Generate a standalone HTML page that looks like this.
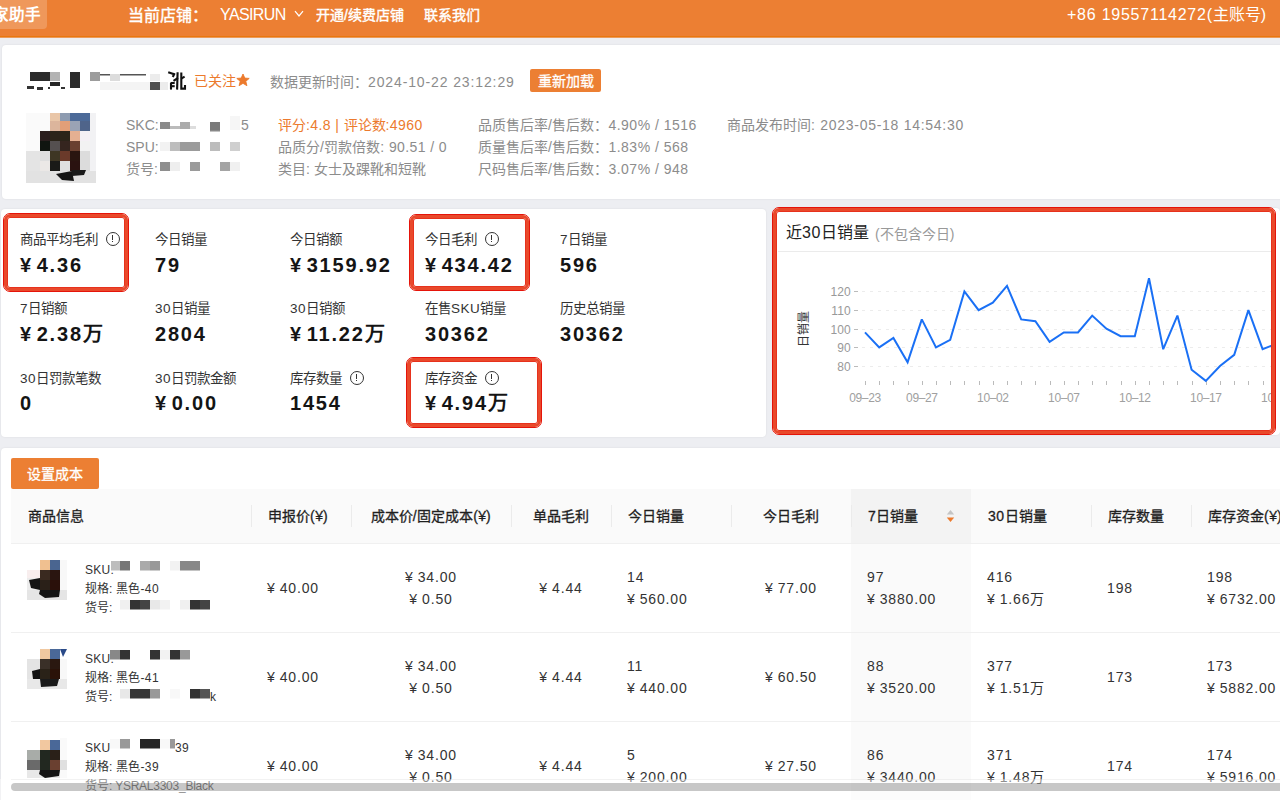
<!DOCTYPE html>
<html lang="zh-CN">
<head>
<meta charset="utf-8">
<style>
*{margin:0;padding:0;box-sizing:border-box;}
html,body{width:1280px;height:800px;overflow:hidden;}
body{background:#edeef2;font-family:"Liberation Sans",sans-serif;color:#333;position:relative;}
.a{position:absolute;white-space:nowrap;}
.card{position:absolute;background:#fff;border-radius:4px;box-shadow:0 0 2px rgba(0,0,0,0.09);}
.redbox{position:absolute;border:1px solid #e5140a;border-radius:7px;}
.redbox>i{position:absolute;left:0;top:0;right:0;bottom:0;border:3px solid #e9492b;border-radius:6px;box-shadow:inset 0 0 0 1px #e7321d;}
.info{display:inline-block;width:14px;height:14px;border:1.2px solid #333;border-radius:50%;position:relative;vertical-align:-2px;margin-left:8px;}
.info:after{content:"";position:absolute;left:5.2px;top:2.5px;width:1.3px;height:5px;background:#333;}
.info:before{content:"";position:absolute;left:5.2px;top:8.6px;width:1.3px;height:1.4px;background:#333;}
</style>
</head>
<body>

<div class="a" style="left:0px;top:0px;width:1280px;height:38px;background:#ec7f33;"></div>
<div class="a" style="left:0px;top:36px;width:1280px;height:1px;background:#e9780e;"></div>
<div class="a" style="left:0px;top:37px;width:1280px;height:1px;background:#ec9a5c;"></div>
<div class="a" style="left:0px;top:0px;width:47px;height:29px;background:rgba(255,255,255,0.2);border-radius:0 0 4px 0;"></div>
<div class="a" style="left:-7px;top:5px;font-size:15.5px;line-height:20px;color:#fff;font-weight:bold;">家助手</div>
<div class="a" style="left:128px;top:6px;font-size:16px;line-height:20px;color:#fff;-webkit-text-stroke:0.4px #fff;">当前店铺：</div>
<div class="a" style="left:220px;top:5px;font-size:16px;line-height:20px;color:#fff;"><span style="letter-spacing:-0.6px">YASIRUN</span></div>
<svg class="a" style="left:294px;top:10px;" width="10" height="8" viewBox="0 0 10 8"><path d="M1 1.2 L5 6 L9 1.2" fill="none" stroke="#fff" stroke-width="1.2"/></svg>
<div class="a" style="left:316px;top:5px;font-size:14px;line-height:20px;color:#fff;-webkit-text-stroke:0.4px #fff;">开通<span style="letter-spacing:0.3px">/</span>续费店铺</div>
<div class="a" style="left:424px;top:5px;font-size:14px;line-height:20px;color:#fff;-webkit-text-stroke:0.4px #fff;">联系我们</div>
<div class="a" style="left:1067px;top:5px;font-size:16px;line-height:20px;color:#fff;"><span style="letter-spacing:0.76px">+86 19557114272(</span>主账号<span style="letter-spacing:0.76px">)</span></div>
<div class="card" style="left:2px;top:45px;width:1290px;height:154px;"></div>
<svg class="a" style="left:26px;top:70px;" width="145" height="22" viewBox="0 0 145 22"><rect x="4" y="2" width="20" height="9" fill="#2b2b2b"/><rect x="24" y="2" width="10" height="9" fill="#b3b3b3"/><rect x="24" y="12" width="10" height="4" fill="#262626"/><rect x="1" y="16" width="7" height="3" fill="#333"/><rect x="11" y="17" width="6" height="3" fill="#333"/><rect x="22" y="17" width="2" height="2" fill="#333"/><rect x="35" y="17" width="4" height="2" fill="#333"/><rect x="44" y="2" width="10" height="16" fill="#2b2b2b"/><rect x="64" y="2" width="10" height="9" fill="#9c9c9c"/><rect x="74" y="4" width="46" height="1.5" fill="#555"/><rect x="84" y="4" width="10" height="7" fill="#dcdcdc"/><rect x="74" y="12" width="60" height="8" fill="#f4f4f4"/><rect x="124" y="4" width="10" height="7" fill="#ececec"/><rect x="124" y="12" width="10" height="8" fill="#505050"/><rect x="134" y="12" width="8" height="8" fill="#ececec"/></svg>
<svg class="a" style="left:160px;top:66px;" width="30" height="28" viewBox="0 0 30 28"><g fill="none" stroke="#111" stroke-width="2.1" stroke-linecap="butt"><path d="M8.2 6.2 L14.2 8.3"/><path d="M14.6 7.2 L12.8 11"/><path d="M17.6 6.2 L17.1 23.6"/><path d="M11 16.5 L11 23.6"/><path d="M11 17 L14.7 17"/><path d="M11 20.2 L14.7 20.2"/><path d="M13.5 14.8 L18 12"/><path d="M21.3 6.5 L21.3 22.6 L25 22.6 L25 19"/><path d="M24.6 10.7 L21.3 12.6"/></g></svg>
<div class="a" style="left:194px;top:71px;font-size:14px;line-height:20px;color:#ec7a2d;">已关注</div>
<svg class="a" style="left:236px;top:73px;" width="14" height="14" viewBox="0 0 14 14"><path d="M7 1 L8.8 5.1 L13.2 5.4 L9.8 8.3 L10.9 12.7 L7 10.3 L3.1 12.7 L4.2 8.3 L0.8 5.4 L5.2 5.1 Z" fill="#ec7a2d" stroke="#ec7a2d" stroke-width="0.9" stroke-linejoin="round"/></svg>
<div class="a" style="left:270px;top:72px;font-size:14px;line-height:20px;color:#8c8c8c;">数据更新时间：<span style="letter-spacing:0.88px">2024-10-22 23:12:29</span></div>
<div class="a" style="left:530px;top:69px;width:71px;height:23px;background:#ec7f33;border-radius:2px;"></div>
<div class="a" style="left:538px;top:71px;font-size:14px;line-height:20px;color:#fff;-webkit-text-stroke:0.3px #fff;">重新加载</div>
<svg class="a" style="left:26px;top:113px;" width="70" height="70" viewBox="0 0 70 70"><rect x="0" y="0" width="70" height="70" fill="#f4f4f4"/><rect x="0" y="0" width="24" height="38" fill="#fafafa"/><rect x="0" y="38" width="14" height="32" fill="#e4e4e4"/><rect x="14" y="38" width="10" height="10" fill="#dedede"/><rect x="14" y="48" width="10" height="22" fill="#ebe8e6"/><rect x="24" y="0" width="10" height="8" fill="#e9c6a8"/><rect x="34" y="0" width="10" height="8" fill="#8d9bb0"/><rect x="44" y="0" width="20" height="8" fill="#4c6a98"/><rect x="24" y="8" width="10" height="10" fill="#dcb59c"/><rect x="34" y="8" width="10" height="10" fill="#e29f78"/><rect x="44" y="8" width="10" height="10" fill="#9aa3b5"/><rect x="54" y="8" width="10" height="10" fill="#4f648a"/><rect x="64" y="0" width="6" height="70" fill="#f2f2f4"/><rect x="14" y="18" width="10" height="10" fill="#2a1e1e"/><rect x="24" y="18" width="20" height="10" fill="#2b2419"/><rect x="44" y="18" width="10" height="10" fill="#e5b092"/><rect x="54" y="18" width="10" height="10" fill="#f5f0f5"/><rect x="14" y="28" width="10" height="10" fill="#101510"/><rect x="24" y="28" width="10" height="10" fill="#555050"/><rect x="34" y="28" width="10" height="10" fill="#35251f"/><rect x="44" y="28" width="10" height="10" fill="#6a4030"/><rect x="54" y="28" width="10" height="10" fill="#f2f2f2"/><rect x="24" y="38" width="10" height="10" fill="#3e3624"/><rect x="34" y="38" width="10" height="10" fill="#6a3a2a"/><rect x="44" y="38" width="10" height="10" fill="#2a1510"/><rect x="54" y="38" width="10" height="20" fill="#dcdcdc"/><rect x="24" y="48" width="10" height="10" fill="#1a1a18"/><rect x="34" y="48" width="10" height="10" fill="#e0e0e0"/><rect x="44" y="48" width="10" height="10" fill="#2a1210"/><rect x="0" y="58" width="70" height="12" fill="#e2e2e2"/><path d="M30 61 L46 58 L48 68 L36 67 Z" fill="#151515"/><path d="M46 57 L60 57 L58 62 L46 63 Z" fill="#1a1a1a"/></svg>
<div class="a" style="left:126px;top:115px;font-size:14px;line-height:20px;color:#8c8c8c;">SKC:</div>
<div class="a" style="left:126px;top:137px;font-size:14px;line-height:20px;color:#8c8c8c;">SPU:</div>
<div class="a" style="left:126px;top:159px;font-size:14px;line-height:20px;color:#8c8c8c;">货号:</div>
<svg class="a" style="left:156px;top:112px;" width="100" height="66" viewBox="0 0 100 66"><rect x="4" y="10" width="10" height="7" fill="#8a8a8a"/><rect x="14" y="14" width="10" height="3" fill="#bbb"/><rect x="24" y="10" width="10" height="7" fill="#ababab"/><rect x="34" y="14" width="6" height="3" fill="#ddd"/><rect x="54" y="10" width="10" height="8" fill="#7a7a7a"/><rect x="54" y="18" width="10" height="1.5" fill="#888"/><rect x="74" y="4" width="10" height="14" fill="#f6f6f6"/><rect x="14" y="30" width="10" height="9" fill="#bdbdbd"/><rect x="24" y="30" width="20" height="9" fill="#9b9b9b"/><rect x="54" y="30" width="10" height="9" fill="#bcbcbc"/><rect x="74" y="30" width="10" height="9" fill="#cfcfcf"/><rect x="4" y="30" width="10" height="9" fill="#f2f2f2"/><rect x="4" y="50" width="10" height="9" fill="#8e8e8e"/><rect x="14" y="50" width="10" height="9" fill="#eeeeee"/><rect x="34" y="50" width="10" height="9" fill="#9a9a9a"/><rect x="64" y="50" width="10" height="9" fill="#a4a4a4"/><rect x="74" y="50" width="10" height="9" fill="#f0f0f0"/></svg>
<div class="a" style="left:241px;top:115px;font-size:14px;line-height:20px;color:#8c8c8c;">5</div>
<div class="a" style="left:278px;top:115px;font-size:14px;line-height:20px;color:#ec7a2d;">评分<span style="letter-spacing:0.4px">:4.8 | </span>评论数<span style="letter-spacing:0.4px">:4960</span></div>
<div class="a" style="left:278px;top:137px;font-size:14px;line-height:20px;color:#8c8c8c;">品质分<span style="letter-spacing:0.4px">/</span>罚款倍数<span style="letter-spacing:0.4px">: 90.51 / 0</span></div>
<div class="a" style="left:278px;top:159px;font-size:14px;line-height:20px;color:#8c8c8c;">类目: 女士及踝靴和短靴</div>
<div class="a" style="left:478px;top:115px;font-size:14px;line-height:20px;color:#8c8c8c;">品质售后率<span style="letter-spacing:0.5px">/</span>售后数：<span style="letter-spacing:0.5px">4.90% / 1516</span></div>
<div class="a" style="left:478px;top:137px;font-size:14px;line-height:20px;color:#8c8c8c;">质量售后率<span style="letter-spacing:0.5px">/</span>售后数：<span style="letter-spacing:0.5px">1.83% / 568</span></div>
<div class="a" style="left:478px;top:159px;font-size:14px;line-height:20px;color:#8c8c8c;">尺码售后率<span style="letter-spacing:0.5px">/</span>售后数：<span style="letter-spacing:0.5px">3.07% / 948</span></div>
<div class="a" style="left:727px;top:115px;font-size:14px;line-height:20px;color:#8c8c8c;">商品发布时间<span style="letter-spacing:0.72px">: 2023-05-18 14:54:30</span></div>
<div class="card" style="left:1px;top:209px;width:765px;height:228px;"></div>
<div class="a" style="left:20px;top:229.5px;font-size:13.5px;line-height:20px;color:#333;">商品平均毛利<span class=info></span></div>
<div class="a" style="left:20px;top:255px;font-size:20px;line-height:20px;color:#141414;font-weight:bold;">¥ <span style="letter-spacing:1.8px">4.36</span></div>
<div class="a" style="left:155px;top:229.5px;font-size:13.5px;line-height:20px;color:#333;">今日销量</div>
<div class="a" style="left:155px;top:255px;font-size:20px;line-height:20px;color:#141414;font-weight:bold;"><span style="letter-spacing:1.8px">79</span></div>
<div class="a" style="left:290px;top:229.5px;font-size:13.5px;line-height:20px;color:#333;">今日销额</div>
<div class="a" style="left:290px;top:255px;font-size:20px;line-height:20px;color:#141414;font-weight:bold;">¥ <span style="letter-spacing:1.8px">3159.92</span></div>
<div class="a" style="left:425px;top:229.5px;font-size:13.5px;line-height:20px;color:#333;">今日毛利<span class=info></span></div>
<div class="a" style="left:425px;top:255px;font-size:20px;line-height:20px;color:#141414;font-weight:bold;">¥ <span style="letter-spacing:1.8px">434.42</span></div>
<div class="a" style="left:560px;top:229.5px;font-size:13.5px;line-height:20px;color:#333;"><span style="letter-spacing:0.5px">7</span>日销量</div>
<div class="a" style="left:560px;top:255px;font-size:20px;line-height:20px;color:#141414;font-weight:bold;"><span style="letter-spacing:1.8px">596</span></div>
<div class="a" style="left:20px;top:299px;font-size:13.5px;line-height:20px;color:#333;"><span style="letter-spacing:0.5px">7</span>日销额</div>
<div class="a" style="left:20px;top:324px;font-size:20px;line-height:20px;color:#141414;font-weight:bold;">¥ <span style="letter-spacing:1.8px">2.38</span>万</div>
<div class="a" style="left:155px;top:299px;font-size:13.5px;line-height:20px;color:#333;"><span style="letter-spacing:0.5px">30</span>日销量</div>
<div class="a" style="left:155px;top:324px;font-size:20px;line-height:20px;color:#141414;font-weight:bold;"><span style="letter-spacing:1.8px">2804</span></div>
<div class="a" style="left:290px;top:299px;font-size:13.5px;line-height:20px;color:#333;"><span style="letter-spacing:0.5px">30</span>日销额</div>
<div class="a" style="left:290px;top:324px;font-size:20px;line-height:20px;color:#141414;font-weight:bold;">¥ <span style="letter-spacing:1.8px">11.22</span>万</div>
<div class="a" style="left:425px;top:299px;font-size:13.5px;line-height:20px;color:#333;">在售<span style="letter-spacing:0.5px">SKU</span>销量</div>
<div class="a" style="left:425px;top:324px;font-size:20px;line-height:20px;color:#141414;font-weight:bold;"><span style="letter-spacing:1.8px">30362</span></div>
<div class="a" style="left:560px;top:299px;font-size:13.5px;line-height:20px;color:#333;">历史总销量</div>
<div class="a" style="left:560px;top:324px;font-size:20px;line-height:20px;color:#141414;font-weight:bold;"><span style="letter-spacing:1.8px">30362</span></div>
<div class="a" style="left:20px;top:368.5px;font-size:13.5px;line-height:20px;color:#333;"><span style="letter-spacing:0.5px">30</span>日罚款笔数</div>
<div class="a" style="left:20px;top:393px;font-size:20px;line-height:20px;color:#141414;font-weight:bold;"><span style="letter-spacing:1.8px">0</span></div>
<div class="a" style="left:155px;top:368.5px;font-size:13.5px;line-height:20px;color:#333;"><span style="letter-spacing:0.5px">30</span>日罚款金额</div>
<div class="a" style="left:155px;top:393px;font-size:20px;line-height:20px;color:#141414;font-weight:bold;">¥ <span style="letter-spacing:1.8px">0.00</span></div>
<div class="a" style="left:290px;top:368.5px;font-size:13.5px;line-height:20px;color:#333;">库存数量<span class=info></span></div>
<div class="a" style="left:290px;top:393px;font-size:20px;line-height:20px;color:#141414;font-weight:bold;"><span style="letter-spacing:1.8px">1454</span></div>
<div class="a" style="left:425px;top:368.5px;font-size:13.5px;line-height:20px;color:#333;">库存资金<span class=info></span></div>
<div class="a" style="left:425px;top:393px;font-size:20px;line-height:20px;color:#141414;font-weight:bold;">¥ <span style="letter-spacing:1.8px">4.94</span>万</div>
<div class="redbox" style="left:3px;top:213px;width:126px;height:79px;"><i></i></div>
<div class="redbox" style="left:409px;top:214px;width:121px;height:77px;"><i></i></div>
<div class="redbox" style="left:406px;top:357px;width:136px;height:71px;"><i></i></div>
<div class="card" style="left:773px;top:208px;width:507px;height:227px;"></div>
<div class="a" style="left:786px;top:223px;font-size:16px;line-height:20px;color:#222;">近<span style="letter-spacing:0.5px">30</span>日销量</div>
<div class="a" style="left:875px;top:224px;font-size:14px;line-height:20px;color:#999;">(不包含今日)</div>
<div class="a" style="left:778px;top:251px;width:493px;height:1px;background:#ebebeb;"></div>
<svg class="a" style="left:773px;top:208px;" width="500" height="227" viewBox="0 0 500 227"><line x1="89" y1="158.5" x2="500" y2="158.5" stroke="#ececec" stroke-width="1" stroke-dasharray="3 5"/><line x1="81" y1="158.5" x2="85" y2="158.5" stroke="#bbb" stroke-width="1"/><text x="78" y="162.8" text-anchor="end" font-size="12" fill="#999" letter-spacing="0.2" font-family="Liberation Sans">80</text><line x1="89" y1="139.5" x2="500" y2="139.5" stroke="#ececec" stroke-width="1" stroke-dasharray="3 5"/><line x1="81" y1="139.5" x2="85" y2="139.5" stroke="#bbb" stroke-width="1"/><text x="78" y="143.8" text-anchor="end" font-size="12" fill="#999" letter-spacing="0.2" font-family="Liberation Sans">90</text><line x1="89" y1="121.5" x2="500" y2="121.5" stroke="#ececec" stroke-width="1" stroke-dasharray="3 5"/><line x1="81" y1="121.5" x2="85" y2="121.5" stroke="#bbb" stroke-width="1"/><text x="78" y="125.8" text-anchor="end" font-size="12" fill="#999" letter-spacing="0.2" font-family="Liberation Sans">100</text><line x1="89" y1="102.5" x2="500" y2="102.5" stroke="#ececec" stroke-width="1" stroke-dasharray="3 5"/><line x1="81" y1="102.5" x2="85" y2="102.5" stroke="#bbb" stroke-width="1"/><text x="78" y="106.8" text-anchor="end" font-size="12" fill="#999" letter-spacing="0.2" font-family="Liberation Sans">110</text><line x1="89" y1="83.5" x2="500" y2="83.5" stroke="#ececec" stroke-width="1" stroke-dasharray="3 5"/><line x1="81" y1="83.5" x2="85" y2="83.5" stroke="#bbb" stroke-width="1"/><text x="78" y="87.8" text-anchor="end" font-size="12" fill="#999" letter-spacing="0.2" font-family="Liberation Sans">120</text><line x1="92.5" y1="173" x2="92.5" y2="177" stroke="#bbb" stroke-width="1"/><line x1="106.5" y1="173" x2="106.5" y2="177" stroke="#bbb" stroke-width="1"/><line x1="120.5" y1="173" x2="120.5" y2="177" stroke="#bbb" stroke-width="1"/><line x1="135.5" y1="173" x2="135.5" y2="177" stroke="#bbb" stroke-width="1"/><line x1="149.5" y1="173" x2="149.5" y2="177" stroke="#bbb" stroke-width="1"/><line x1="163.5" y1="173" x2="163.5" y2="177" stroke="#bbb" stroke-width="1"/><line x1="177.5" y1="173" x2="177.5" y2="177" stroke="#bbb" stroke-width="1"/><line x1="191.5" y1="173" x2="191.5" y2="177" stroke="#bbb" stroke-width="1"/><line x1="206.5" y1="173" x2="206.5" y2="177" stroke="#bbb" stroke-width="1"/><line x1="220.5" y1="173" x2="220.5" y2="177" stroke="#bbb" stroke-width="1"/><line x1="234.5" y1="173" x2="234.5" y2="177" stroke="#bbb" stroke-width="1"/><line x1="248.5" y1="173" x2="248.5" y2="177" stroke="#bbb" stroke-width="1"/><line x1="262.5" y1="173" x2="262.5" y2="177" stroke="#bbb" stroke-width="1"/><line x1="277.5" y1="173" x2="277.5" y2="177" stroke="#bbb" stroke-width="1"/><line x1="291.5" y1="173" x2="291.5" y2="177" stroke="#bbb" stroke-width="1"/><line x1="305.5" y1="173" x2="305.5" y2="177" stroke="#bbb" stroke-width="1"/><line x1="319.5" y1="173" x2="319.5" y2="177" stroke="#bbb" stroke-width="1"/><line x1="333.5" y1="173" x2="333.5" y2="177" stroke="#bbb" stroke-width="1"/><line x1="348.5" y1="173" x2="348.5" y2="177" stroke="#bbb" stroke-width="1"/><line x1="362.5" y1="173" x2="362.5" y2="177" stroke="#bbb" stroke-width="1"/><line x1="376.5" y1="173" x2="376.5" y2="177" stroke="#bbb" stroke-width="1"/><line x1="390.5" y1="173" x2="390.5" y2="177" stroke="#bbb" stroke-width="1"/><line x1="404.5" y1="173" x2="404.5" y2="177" stroke="#bbb" stroke-width="1"/><line x1="419.5" y1="173" x2="419.5" y2="177" stroke="#bbb" stroke-width="1"/><line x1="433.5" y1="173" x2="433.5" y2="177" stroke="#bbb" stroke-width="1"/><line x1="447.5" y1="173" x2="447.5" y2="177" stroke="#bbb" stroke-width="1"/><line x1="461.5" y1="173" x2="461.5" y2="177" stroke="#bbb" stroke-width="1"/><line x1="475.5" y1="173" x2="475.5" y2="177" stroke="#bbb" stroke-width="1"/><line x1="490.5" y1="173" x2="490.5" y2="177" stroke="#bbb" stroke-width="1"/><line x1="504.5" y1="173" x2="504.5" y2="177" stroke="#bbb" stroke-width="1"/><text x="92.0" y="193.8" text-anchor="middle" font-size="12" fill="#a0a0a0" letter-spacing="-0.4" font-family="Liberation Sans">09–23</text><text x="148.8" y="193.8" text-anchor="middle" font-size="12" fill="#a0a0a0" letter-spacing="-0.4" font-family="Liberation Sans">09–27</text><text x="219.8" y="193.8" text-anchor="middle" font-size="12" fill="#a0a0a0" letter-spacing="-0.4" font-family="Liberation Sans">10–02</text><text x="290.8" y="193.8" text-anchor="middle" font-size="12" fill="#a0a0a0" letter-spacing="-0.4" font-family="Liberation Sans">10–07</text><text x="361.8" y="193.8" text-anchor="middle" font-size="12" fill="#a0a0a0" letter-spacing="-0.4" font-family="Liberation Sans">10–12</text><text x="432.8" y="193.8" text-anchor="middle" font-size="12" fill="#a0a0a0" letter-spacing="-0.4" font-family="Liberation Sans">10–17</text><text x="503.8" y="193.8" text-anchor="middle" font-size="12" fill="#a0a0a0" letter-spacing="-0.4" font-family="Liberation Sans">10–22</text><polyline points="92.0,124.4 106.2,139.4 120.4,130.0 134.6,154.3 148.8,111.4 163.0,139.4 177.2,131.9 191.4,83.4 205.6,102.1 219.8,94.6 234.0,77.8 248.2,111.4 262.4,113.2 276.6,133.8 290.8,124.4 305.0,124.4 319.2,107.6 333.4,120.7 347.6,128.2 361.8,128.2 376.0,70.3 390.2,141.2 404.4,107.6 418.6,161.7 432.8,172.9 447.0,158.0 461.2,146.8 475.4,102.1 489.6,141.2 503.8,135.6" fill="none" stroke="#1a70f5" stroke-width="2" stroke-linejoin="miter" stroke-miterlimit="2.5"/><text transform="translate(31,120.5) rotate(-90)" text-anchor="middle" font-size="12" fill="#333" y="4" font-family="Liberation Sans">日销量</text></svg>
<div class="redbox" style="left:772px;top:207px;width:504px;height:228px;"><i></i></div>
<div class="card" style="left:1px;top:448px;width:1290px;height:400px;"></div>
<div class="a" style="left:11px;top:458px;width:88px;height:31px;background:#ec7f33;border-radius:2px;"></div>
<div class="a" style="left:27px;top:464px;font-size:14px;line-height:20px;color:#fff;-webkit-text-stroke:0.3px #fff;">设置成本</div>
<div class="a" style="left:11px;top:489px;width:1280px;height:55px;background:#fafafa;"></div>
<div class="a" style="left:851px;top:489px;width:120px;height:55px;background:#f3f3f3;"></div>
<div class="a" style="left:851px;top:544px;width:120px;height:260px;background:#fafafa;"></div>
<div class="a" style="left:11px;top:543px;width:1280px;height:1px;background:#f0f0f0;"></div>
<div class="a" style="left:28px;top:506px;font-size:14px;line-height:20px;color:#1f1f1f;-webkit-text-stroke:0.3px #1f1f1f;">商品信息</div>
<div class="a" style="left:251px;top:505px;width:1px;height:22px;background:#ebebeb;"></div>
<div class="a" style="left:268px;top:506px;font-size:14px;line-height:20px;color:#1f1f1f;-webkit-text-stroke:0.3px #1f1f1f;">申报价<span style="letter-spacing:0.5px">(</span>¥<span style="letter-spacing:0.5px">)</span></div>
<div class="a" style="left:351px;top:505px;width:1px;height:22px;background:#ebebeb;"></div>
<div class="a" style="left:351px;width:160px;text-align:center;top:506px;font-size:14px;line-height:20px;color:#1f1f1f;-webkit-text-stroke:0.3px #1f1f1f;">成本价<span style="letter-spacing:0.5px">/</span>固定成本<span style="letter-spacing:0.5px">(</span>¥<span style="letter-spacing:0.5px">)</span></div>
<div class="a" style="left:511px;top:505px;width:1px;height:22px;background:#ebebeb;"></div>
<div class="a" style="left:511px;width:100px;text-align:center;top:506px;font-size:14px;line-height:20px;color:#1f1f1f;-webkit-text-stroke:0.3px #1f1f1f;">单品毛利</div>
<div class="a" style="left:611px;top:505px;width:1px;height:22px;background:#ebebeb;"></div>
<div class="a" style="left:628px;top:506px;font-size:14px;line-height:20px;color:#1f1f1f;-webkit-text-stroke:0.3px #1f1f1f;">今日销量</div>
<div class="a" style="left:731px;top:505px;width:1px;height:22px;background:#ebebeb;"></div>
<div class="a" style="left:731px;width:120px;text-align:center;top:506px;font-size:14px;line-height:20px;color:#1f1f1f;-webkit-text-stroke:0.3px #1f1f1f;">今日毛利</div>
<div class="a" style="left:851px;top:505px;width:1px;height:22px;background:#ebebeb;"></div>
<div class="a" style="left:868px;top:506px;font-size:14px;line-height:20px;color:#1f1f1f;-webkit-text-stroke:0.3px #1f1f1f;"><span style="letter-spacing:0.5px">7</span>日销量</div>
<div class="a" style="left:988px;top:506px;font-size:14px;line-height:20px;color:#1f1f1f;-webkit-text-stroke:0.3px #1f1f1f;"><span style="letter-spacing:0.5px">30</span>日销量</div>
<div class="a" style="left:1091px;top:505px;width:1px;height:22px;background:#ebebeb;"></div>
<div class="a" style="left:1108px;top:506px;font-size:14px;line-height:20px;color:#1f1f1f;-webkit-text-stroke:0.3px #1f1f1f;">库存数量</div>
<div class="a" style="left:1191px;top:505px;width:1px;height:22px;background:#ebebeb;"></div>
<div class="a" style="left:1208px;top:506px;font-size:14px;line-height:20px;color:#1f1f1f;-webkit-text-stroke:0.3px #1f1f1f;">库存资金<span style="letter-spacing:0.5px">(</span>¥<span style="letter-spacing:0.5px">)</span></div>
<svg class="a" style="left:946px;top:510px;" width="9" height="13" viewBox="0 0 9 13"><path d="M4.5 0 L8.2 4.5 L0.8 4.5 Z" fill="#c4c4c4"/><path d="M4.5 12 L8.2 7.4 L0.8 7.4 Z" fill="#ec7a2d"/></svg>
<div class="a" style="left:11px;top:632px;width:1280px;height:1px;background:#f0f0f0;"></div>
<svg class="a" style="left:27px;top:560px;" width="40" height="40" viewBox="0 0 40 40"><rect x="0" y="0" width="40" height="40" fill="#ffffff"/><rect x="0" y="10" width="13" height="30" fill="#ececec"/><rect x="0" y="10" width="13" height="8" fill="#f8eeee"/><rect x="13" y="0" width="10" height="10" fill="#f0c090"/><rect x="23" y="0" width="10" height="10" fill="#4a6590"/><rect x="33" y="0" width="7" height="40" fill="#f8f8f8"/><rect x="13" y="10" width="10" height="10" fill="#3a2a20"/><rect x="23" y="10" width="10" height="10" fill="#2a1510"/><rect x="13" y="20" width="10" height="10" fill="#2a2018"/><rect x="23" y="20" width="10" height="10" fill="#2a100a"/><rect x="0" y="30" width="40" height="10" fill="#e5e5e5"/><path d="M2 20 L13 18 L13 30 L4 28 Z" fill="#141414"/><path d="M13 30 L33 30 L32 37 L18 38 L12 34 Z" fill="#151515"/></svg>
<div class="a" style="left:85px;top:561px;font-size:12px;line-height:19px;color:#333;"><span style="letter-spacing:0.3px">SKU:</span></div>
<div class="a" style="left:85px;top:580px;font-size:12px;line-height:19px;color:#333;">规格<span style="letter-spacing:0.4px">: </span>黑色<span style="letter-spacing:0.4px">-40</span></div>
<div class="a" style="left:85px;top:599px;font-size:12px;line-height:19px;color:#333;">货号<span style="letter-spacing:0.4px">:</span></div>
<svg class="a" style="left:0px;top:561px;" width="220" height="10" viewBox="0 0 220 10"><rect x="111" y="0" width="9" height="9.5" fill="#bdbdbd"/><rect x="120" y="0" width="10" height="9.5" fill="#777"/><rect x="140" y="0" width="10" height="9.5" fill="#aaa"/><rect x="150" y="0" width="10" height="9.5" fill="#999"/><rect x="170" y="0" width="10" height="9.5" fill="#f2f2f2"/><rect x="180" y="0" width="20" height="9.5" fill="#888"/></svg>
<svg class="a" style="left:0px;top:600px;" width="220" height="10" viewBox="0 0 220 10"><rect x="120" y="0" width="10" height="9.5" fill="#f0f0f0"/><rect x="130" y="0" width="10" height="9.5" fill="#333"/><rect x="140" y="0" width="10" height="9.5" fill="#444"/><rect x="150" y="0" width="10" height="9.5" fill="#e8e8e8"/><rect x="160" y="0" width="10" height="9.5" fill="#f2f2f2"/><rect x="180" y="0" width="10" height="9.5" fill="#f0f0f0"/><rect x="190" y="0" width="10" height="9.5" fill="#333"/><rect x="200" y="0" width="10" height="9.5" fill="#444"/></svg>
<div class="a" style="left:267px;top:578px;font-size:14px;line-height:20px;color:#333;"><span style="letter-spacing:0.5px">¥ </span><span style="letter-spacing:0.85px">40.00</span></div>
<div class="a" style="left:351px;width:160px;text-align:center;top:567px;font-size:14px;line-height:20px;color:#333;"><span style="letter-spacing:0.5px">¥ </span><span style="letter-spacing:0.85px">34.00</span></div>
<div class="a" style="left:351px;width:160px;text-align:center;top:589px;font-size:14px;line-height:20px;color:#333;"><span style="letter-spacing:0.5px">¥ </span><span style="letter-spacing:0.85px">0.50</span></div>
<div class="a" style="left:511px;width:100px;text-align:center;top:578px;font-size:14px;line-height:20px;color:#333;"><span style="letter-spacing:0.5px">¥ </span><span style="letter-spacing:0.85px">4.44</span></div>
<div class="a" style="left:627px;top:567px;font-size:14px;line-height:20px;color:#333;"><span style="letter-spacing:0.85px">14</span></div>
<div class="a" style="left:627px;top:589px;font-size:14px;line-height:20px;color:#333;"><span style="letter-spacing:0.5px">¥ </span><span style="letter-spacing:0.85px">560.00</span></div>
<div class="a" style="left:731px;width:120px;text-align:center;top:578px;font-size:14px;line-height:20px;color:#333;"><span style="letter-spacing:0.5px">¥ </span><span style="letter-spacing:0.85px">77.00</span></div>
<div class="a" style="left:867px;top:567px;font-size:14px;line-height:20px;color:#333;"><span style="letter-spacing:0.85px">97</span></div>
<div class="a" style="left:867px;top:589px;font-size:14px;line-height:20px;color:#333;"><span style="letter-spacing:0.5px">¥ </span><span style="letter-spacing:0.85px">3880.00</span></div>
<div class="a" style="left:987px;top:567px;font-size:14px;line-height:20px;color:#333;"><span style="letter-spacing:0.85px">416</span></div>
<div class="a" style="left:987px;top:589px;font-size:14px;line-height:20px;color:#333;"><span style="letter-spacing:0.5px">¥ </span><span style="letter-spacing:0.85px">1.66</span>万</div>
<div class="a" style="left:1107px;top:578px;font-size:14px;line-height:20px;color:#333;"><span style="letter-spacing:0.85px">198</span></div>
<div class="a" style="left:1207px;top:567px;font-size:14px;line-height:20px;color:#333;"><span style="letter-spacing:0.85px">198</span></div>
<div class="a" style="left:1207px;top:589px;font-size:14px;line-height:20px;color:#333;"><span style="letter-spacing:0.5px">¥ </span><span style="letter-spacing:0.85px">6732.00</span></div>
<div class="a" style="left:11px;top:721px;width:1280px;height:1px;background:#f0f0f0;"></div>
<svg class="a" style="left:27px;top:649px;" width="40" height="40" viewBox="0 0 40 40"><rect x="0" y="0" width="40" height="40" fill="#ffffff"/><rect x="0" y="10" width="13" height="20" fill="#e4e4e4"/><rect x="13" y="0" width="10" height="10" fill="#f0c8a0"/><rect x="23" y="0" width="10" height="10" fill="#4a6898"/><path d="M33 0 L40 0 L36 8 Z" fill="#2a4a88"/><rect x="33" y="10" width="7" height="30" fill="#f8f8f8"/><rect x="13" y="10" width="10" height="10" fill="#3a3028"/><rect x="23" y="10" width="10" height="10" fill="#2a1810"/><rect x="13" y="20" width="10" height="10" fill="#2a2218"/><rect x="23" y="20" width="10" height="10" fill="#2a1208"/><rect x="0" y="30" width="40" height="10" fill="#e8e8e8"/><path d="M5 22 L13 20 L13 30 L6 30 Z" fill="#111"/><path d="M13 30 L32 30 L30 37 L14 38 Z" fill="#1a1a1a"/></svg>
<div class="a" style="left:85px;top:650px;font-size:12px;line-height:19px;color:#333;"><span style="letter-spacing:0.3px">SKU:</span></div>
<div class="a" style="left:85px;top:669px;font-size:12px;line-height:19px;color:#333;">规格<span style="letter-spacing:0.4px">: </span>黑色<span style="letter-spacing:0.4px">-41</span></div>
<div class="a" style="left:85px;top:688px;font-size:12px;line-height:19px;color:#333;">货号<span style="letter-spacing:0.4px">:</span></div>
<svg class="a" style="left:0px;top:650px;" width="220" height="10" viewBox="0 0 220 10"><rect x="110" y="0" width="10" height="9.5" fill="#888"/><rect x="120" y="0" width="10" height="9.5" fill="#333"/><rect x="150" y="0" width="10" height="9.5" fill="#333"/><rect x="160" y="0" width="10" height="9.5" fill="#f2f2f2"/><rect x="170" y="0" width="10" height="9.5" fill="#333"/><rect x="180" y="0" width="10" height="9.5" fill="#999"/></svg>
<svg class="a" style="left:0px;top:689px;" width="220" height="10" viewBox="0 0 220 10"><rect x="120" y="0" width="10" height="9.5" fill="#e8e8e8"/><rect x="130" y="0" width="20" height="9.5" fill="#363636"/><rect x="150" y="0" width="10" height="9.5" fill="#999"/><rect x="170" y="0" width="10" height="9.5" fill="#f8f8f8"/><rect x="190" y="0" width="10" height="9.5" fill="#333"/><rect x="200" y="0" width="10" height="9.5" fill="#555"/></svg>
<div class="a" style="left:210px;top:688px;font-size:12px;line-height:19px;color:#333;">k</div>
<div class="a" style="left:267px;top:667px;font-size:14px;line-height:20px;color:#333;"><span style="letter-spacing:0.5px">¥ </span><span style="letter-spacing:0.85px">40.00</span></div>
<div class="a" style="left:351px;width:160px;text-align:center;top:656px;font-size:14px;line-height:20px;color:#333;"><span style="letter-spacing:0.5px">¥ </span><span style="letter-spacing:0.85px">34.00</span></div>
<div class="a" style="left:351px;width:160px;text-align:center;top:678px;font-size:14px;line-height:20px;color:#333;"><span style="letter-spacing:0.5px">¥ </span><span style="letter-spacing:0.85px">0.50</span></div>
<div class="a" style="left:511px;width:100px;text-align:center;top:667px;font-size:14px;line-height:20px;color:#333;"><span style="letter-spacing:0.5px">¥ </span><span style="letter-spacing:0.85px">4.44</span></div>
<div class="a" style="left:627px;top:656px;font-size:14px;line-height:20px;color:#333;"><span style="letter-spacing:0.85px">11</span></div>
<div class="a" style="left:627px;top:678px;font-size:14px;line-height:20px;color:#333;"><span style="letter-spacing:0.5px">¥ </span><span style="letter-spacing:0.85px">440.00</span></div>
<div class="a" style="left:731px;width:120px;text-align:center;top:667px;font-size:14px;line-height:20px;color:#333;"><span style="letter-spacing:0.5px">¥ </span><span style="letter-spacing:0.85px">60.50</span></div>
<div class="a" style="left:867px;top:656px;font-size:14px;line-height:20px;color:#333;"><span style="letter-spacing:0.85px">88</span></div>
<div class="a" style="left:867px;top:678px;font-size:14px;line-height:20px;color:#333;"><span style="letter-spacing:0.5px">¥ </span><span style="letter-spacing:0.85px">3520.00</span></div>
<div class="a" style="left:987px;top:656px;font-size:14px;line-height:20px;color:#333;"><span style="letter-spacing:0.85px">377</span></div>
<div class="a" style="left:987px;top:678px;font-size:14px;line-height:20px;color:#333;"><span style="letter-spacing:0.5px">¥ </span><span style="letter-spacing:0.85px">1.51</span>万</div>
<div class="a" style="left:1107px;top:667px;font-size:14px;line-height:20px;color:#333;"><span style="letter-spacing:0.85px">173</span></div>
<div class="a" style="left:1207px;top:656px;font-size:14px;line-height:20px;color:#333;"><span style="letter-spacing:0.85px">173</span></div>
<div class="a" style="left:1207px;top:678px;font-size:14px;line-height:20px;color:#333;"><span style="letter-spacing:0.5px">¥ </span><span style="letter-spacing:0.85px">5882.00</span></div>
<div class="a" style="left:11px;top:810px;width:1280px;height:1px;background:#f0f0f0;"></div>
<svg class="a" style="left:27px;top:738px;" width="40" height="40" viewBox="0 0 40 40"><rect x="0" y="0" width="40" height="40" fill="#ffffff"/><rect x="0" y="12" width="13" height="10" fill="#a8aca8"/><rect x="0" y="22" width="13" height="10" fill="#6a6a6a"/><rect x="0" y="32" width="40" height="8" fill="#e8e8e8"/><rect x="13" y="2" width="10" height="10" fill="#f2c8a0"/><rect x="23" y="2" width="10" height="10" fill="#4a6898"/><rect x="33" y="0" width="7" height="40" fill="#fafafa"/><rect x="13" y="12" width="10" height="10" fill="#222820"/><rect x="23" y="12" width="10" height="10" fill="#2a2018"/><rect x="13" y="22" width="10" height="10" fill="#222820"/><rect x="23" y="22" width="10" height="10" fill="#6a4030"/><rect x="33" y="22" width="7" height="10" fill="#e0e0e0"/><path d="M13 32 L33 32 L32 38 L18 40 L12 36 Z" fill="#151515"/></svg>
<div class="a" style="left:85px;top:739px;font-size:12px;line-height:19px;color:#333;"><span style="letter-spacing:0.3px">SKU</span></div>
<div class="a" style="left:85px;top:758px;font-size:12px;line-height:19px;color:#333;">规格<span style="letter-spacing:0.4px">: </span>黑色<span style="letter-spacing:0.4px">-39</span></div>
<div class="a" style="left:85px;top:777px;font-size:12px;line-height:19px;color:#333;">货号<span style="letter-spacing:-0.25px">: YSRAL3303_Black</span></div>
<svg class="a" style="left:0px;top:739px;" width="220" height="10" viewBox="0 0 220 10"><rect x="110" y="0" width="10" height="9.5" fill="#f8f8f8"/><rect x="120" y="0" width="10" height="9.5" fill="#999"/><rect x="140" y="0" width="20" height="9.5" fill="#262626"/><rect x="160" y="0" width="10" height="9.5" fill="#f8f8f8"/><rect x="170" y="0" width="5" height="9.5" fill="#999"/></svg>
<div class="a" style="left:175px;top:739px;font-size:12px;line-height:19px;color:#333;"><span style="letter-spacing:0.3px">39</span></div>
<div class="a" style="left:267px;top:756px;font-size:14px;line-height:20px;color:#333;"><span style="letter-spacing:0.5px">¥ </span><span style="letter-spacing:0.85px">40.00</span></div>
<div class="a" style="left:351px;width:160px;text-align:center;top:745px;font-size:14px;line-height:20px;color:#333;"><span style="letter-spacing:0.5px">¥ </span><span style="letter-spacing:0.85px">34.00</span></div>
<div class="a" style="left:351px;width:160px;text-align:center;top:767px;font-size:14px;line-height:20px;color:#333;"><span style="letter-spacing:0.5px">¥ </span><span style="letter-spacing:0.85px">0.50</span></div>
<div class="a" style="left:511px;width:100px;text-align:center;top:756px;font-size:14px;line-height:20px;color:#333;"><span style="letter-spacing:0.5px">¥ </span><span style="letter-spacing:0.85px">4.44</span></div>
<div class="a" style="left:627px;top:745px;font-size:14px;line-height:20px;color:#333;"><span style="letter-spacing:0.85px">5</span></div>
<div class="a" style="left:627px;top:767px;font-size:14px;line-height:20px;color:#333;"><span style="letter-spacing:0.5px">¥ </span><span style="letter-spacing:0.85px">200.00</span></div>
<div class="a" style="left:731px;width:120px;text-align:center;top:756px;font-size:14px;line-height:20px;color:#333;"><span style="letter-spacing:0.5px">¥ </span><span style="letter-spacing:0.85px">27.50</span></div>
<div class="a" style="left:867px;top:745px;font-size:14px;line-height:20px;color:#333;"><span style="letter-spacing:0.85px">86</span></div>
<div class="a" style="left:867px;top:767px;font-size:14px;line-height:20px;color:#333;"><span style="letter-spacing:0.5px">¥ </span><span style="letter-spacing:0.85px">3440.00</span></div>
<div class="a" style="left:987px;top:745px;font-size:14px;line-height:20px;color:#333;"><span style="letter-spacing:0.85px">371</span></div>
<div class="a" style="left:987px;top:767px;font-size:14px;line-height:20px;color:#333;"><span style="letter-spacing:0.5px">¥ </span><span style="letter-spacing:0.85px">1.48</span>万</div>
<div class="a" style="left:1107px;top:756px;font-size:14px;line-height:20px;color:#333;"><span style="letter-spacing:0.85px">174</span></div>
<div class="a" style="left:1207px;top:745px;font-size:14px;line-height:20px;color:#333;"><span style="letter-spacing:0.85px">174</span></div>
<div class="a" style="left:1207px;top:767px;font-size:14px;line-height:20px;color:#333;"><span style="letter-spacing:0.5px">¥ </span><span style="letter-spacing:0.85px">5916.00</span></div>
<div class="a" style="left:0px;top:779px;width:1280px;height:21px;background:rgba(255,255,255,0.45);"></div>
<div class="a" style="left:11px;top:779px;width:1280px;height:1px;background:rgba(0,0,0,0.05);"></div>
<div class="a" style="left:11px;top:783px;width:1280px;height:8px;background:rgba(0,0,0,0.22);border-radius:4px;"></div>
</body>
</html>
